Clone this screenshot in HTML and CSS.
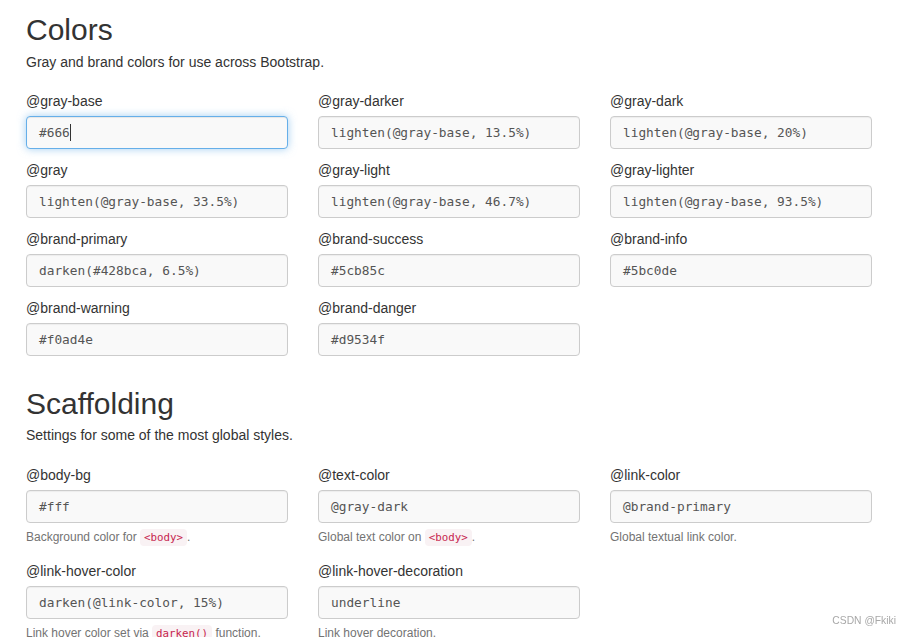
FILE: index.html
```html
<!DOCTYPE html>
<html lang="en">
<head>
<meta charset="utf-8">
<title>Customize Less variables</title>
<link rel="stylesheet" href="styles.css">
</head>
<body>
<main class="page">
  <section class="section">
    <h1 class="title">Colors</h1>
    <p class="lead">Gray and brand colors for use across Bootstrap.</p>
    <div class="grid">
      <div class="group"><label class="label">@gray-base</label><div class="field field-focus">#666<span class="caret"></span></div></div>
      <div class="group"><label class="label">@gray-darker</label><div class="field">lighten(@gray-base, 13.5%)</div></div>
      <div class="group"><label class="label">@gray-dark</label><div class="field">lighten(@gray-base, 20%)</div></div>
      <div class="group"><label class="label">@gray</label><div class="field">lighten(@gray-base, 33.5%)</div></div>
      <div class="group"><label class="label">@gray-light</label><div class="field">lighten(@gray-base, 46.7%)</div></div>
      <div class="group"><label class="label">@gray-lighter</label><div class="field">lighten(@gray-base, 93.5%)</div></div>
      <div class="group"><label class="label">@brand-primary</label><div class="field">darken(#428bca, 6.5%)</div></div>
      <div class="group"><label class="label">@brand-success</label><div class="field">#5cb85c</div></div>
      <div class="group"><label class="label">@brand-info</label><div class="field">#5bc0de</div></div>
      <div class="group"><label class="label">@brand-warning</label><div class="field">#f0ad4e</div></div>
      <div class="group"><label class="label">@brand-danger</label><div class="field">#d9534f</div></div>
    </div>
  </section>
  <section class="section section-next">
    <h1 class="title">Scaffolding</h1>
    <p class="lead">Settings for some of the most global styles.</p>
    <div class="grid">
      <div class="group"><label class="label">@body-bg</label><div class="field">#fff</div><p class="help">Background color for <code class="code">&lt;body&gt;</code>.</p></div>
      <div class="group"><label class="label">@text-color</label><div class="field">@gray-dark</div><p class="help">Global text color on <code class="code">&lt;body&gt;</code>.</p></div>
      <div class="group"><label class="label">@link-color</label><div class="field">@brand-primary</div><p class="help">Global textual link color.</p></div>
      <div class="group"><label class="label">@link-hover-color</label><div class="field">darken(@link-color, 15%)</div><p class="help">Link hover color set via <code class="code">darken()</code> function.</p></div>
      <div class="group"><label class="label">@link-hover-decoration</label><div class="field">underline</div><p class="help">Link hover decoration.</p></div>
    </div>
  </section>
</main>
<div class="watermark">CSDN @Fkiki</div>
</body>
</html>
```

FILE: styles.css
```css
html {
  overflow: hidden;
}

body {
  margin: 0;
  background: #fff;
  color: #333;
  font-family: "Liberation Sans", Arial, sans-serif;
  font-size: 14px;
  line-height: 20px;
}

.page {
  padding: 13px 0 0 26px;
}

.section-next {
  margin-top: 31px;
}

.title {
  margin: 0;
  font-size: 30px;
  line-height: 33px;
  font-weight: 400;
  color: #333;
}

.lead {
  margin: 6px 0 0;
  font-size: 14px;
  line-height: 20px;
}

.section-next .lead {
  margin-top: 5px;
}

.grid {
  display: grid;
  grid-template-columns: repeat(3, 262px);
  column-gap: 30px;
  row-gap: 11px;
  margin-top: 19px;
  align-items: start;
}

.section-next .grid {
  margin-top: 20px;
}

.group {
  display: flex;
  flex-direction: column;
}

.label {
  display: block;
  font-size: 14px;
  line-height: 20px;
  margin-bottom: 5px;
  color: #333;
}

.field {
  box-sizing: border-box;
  height: 33px;
  display: flex;
  align-items: center;
  padding: 0 12px;
  border: 1px solid #ccc;
  border-radius: 4px;
  background: #f9f9f9;
  color: #555;
  font-family: "DejaVu Sans Mono", "Liberation Mono", monospace;
  font-size: 12.8px;
  box-shadow: inset 0 1px 1px rgba(0, 0, 0, 0.05);
  white-space: nowrap;
}

.field-focus {
  border-color: #66afe9;
  box-shadow: inset 0 1px 1px rgba(0, 0, 0, 0.075), 0 0 8px rgba(102, 175, 233, 0.6);
}

.caret {
  display: inline-block;
  width: 0;
  height: 17px;
  border-left: 1px solid #333;
  margin-left: 0;
}

.help {
  margin: 6px 0 4px;
  font-size: 12px;
  line-height: 17px;
  color: #737373;
}

.code {
  display: inline-block;
  padding: 0 4px;
  line-height: 17px;
  font-family: "DejaVu Sans Mono", "Liberation Mono", monospace;
  font-size: 10.8px;
  color: #c7254e;
  background: #f9f2f4;
  border-radius: 4px;
  vertical-align: top;
}

.watermark {
  position: fixed;
  right: 15px;
  bottom: 9px;
  font-family: "Liberation Sans", Arial, sans-serif;
  font-size: 10.3px;
  line-height: 14px;
  color: #a8a8a8;
}
```
